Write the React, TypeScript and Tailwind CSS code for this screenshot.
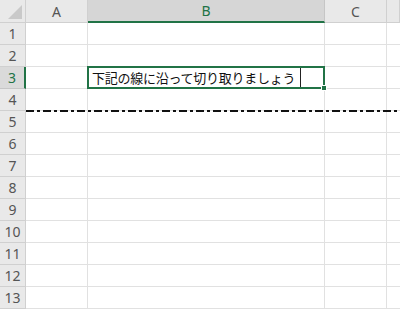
import React from 'react';

const rows = Array.from({ length: 13 }, (_, i) => i + 1);
const cols = ['A', 'B', 'C', ''];

export default function App() {
	return (
		<div
			className="relative w-[400px] h-[309px] overflow-hidden bg-white"
			style={{ fontFamily: '"Noto Sans", "Noto Sans CJK JP", sans-serif' }}
		>
			<div className="grid grid-cols-[26px_62px_237px_62px_1fr] grid-rows-[23px_repeat(13,22px)]">
				{/* corner */}
				<div className="relative bg-[#e9e9e9] border-r border-b border-[#d0d0d0]">
					<svg className="absolute right-[3px] bottom-[3px]" width="14" height="14" viewBox="0 0 14 14">
						<polygon points="14,0 14,14 0,14" fill="#c9c9c9" />
					</svg>
				</div>
				{cols.map((c) => (
					<div
						key={c || 'd'}
						className={
							c === 'B'
								? 'flex items-center justify-center bg-[#d6d6d6] border-r border-[#c6c6c6] border-b-2 border-b-[#217346] text-[14px] text-[#217346]'
								: 'flex items-center justify-center bg-[#e9e9e9] border-r border-b border-[#d0d0d0] text-[14px] text-[#555]'
						}
					>
						{c}
					</div>
				))}
				{rows.map((r) => (
					<React.Fragment key={r}>
						<div
							className={
								r === 3
									? 'flex items-center justify-center bg-[#dadada] border-b border-[#c6c6c6] border-r-2 border-r-[#217346] text-[14px] text-[#217346]'
									: 'flex items-center justify-center bg-[#e9e9e9] border-r border-b border-[#d0d0d0] text-[14px] text-[#555]'
							}
						>
							{r}
						</div>
						<div className="border-r border-b border-[#e1e1e1]" />
						<div className="relative border-r border-b border-[#e1e1e1]">
							{r === 3 && (
								<div className="absolute -left-px -top-px right-[-1px] bottom-[-1px] border-2 border-[#217346] z-10 flex items-center">
									<span
										className="pl-[3px] text-[13px] tracking-[-0.25px] text-[#111] whitespace-nowrap leading-none"
										style={{ fontFamily: '"Noto Sans CJK JP", sans-serif' }}
									>
										下記の線に沿って切り取りましょう
									</span>
									<div className="absolute left-[211px] top-0 bottom-0 w-px bg-[#222]" />
									<div className="absolute right-[-4px] bottom-[-4px] w-[6px] h-[6px] bg-[#217346] border border-white" />
								</div>
							)}
						</div>
						<div className="border-r border-b border-[#e1e1e1]" />
						<div className="border-b border-[#e1e1e1]" />
					</React.Fragment>
				))}
			</div>
			<svg className="absolute left-[26px] top-[109px]" width="374" height="4" viewBox="0 0 374 4">
				<line x1="0" y1="2" x2="374" y2="2" stroke="#111" strokeWidth="2.2" strokeDasharray="8 3 3 3" />
			</svg>
		</div>
	);
}
